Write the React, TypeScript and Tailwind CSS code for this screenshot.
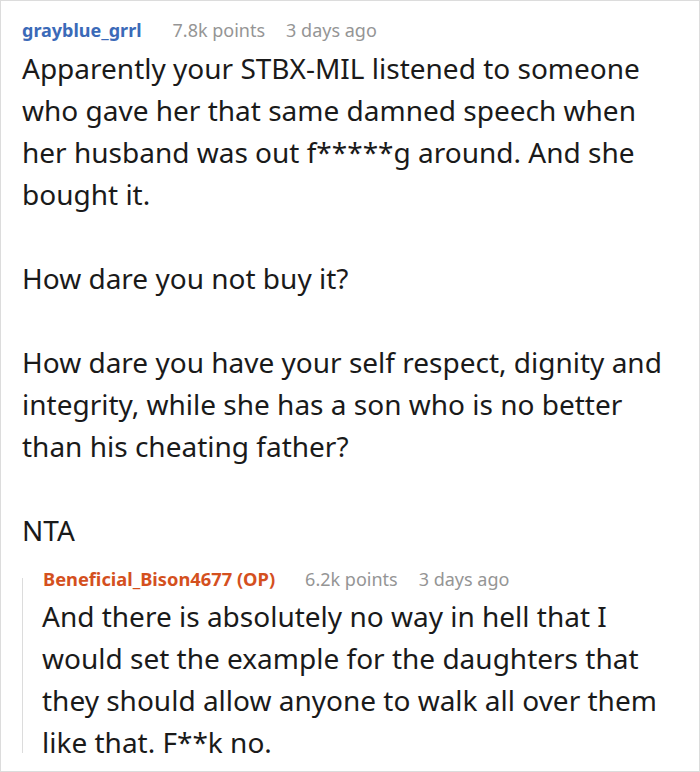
import React from "react";

const font = { fontFamily: '"Noto Sans", "Open Sans", sans-serif' };

export default function App() {
  return (
    <div className="w-[700px] h-[772px] bg-white border border-[#dcdcdc] overflow-hidden" style={font}>
      <div className="pl-[21px] pr-[24px] pt-[15px]">
        <div className="flex items-baseline text-[18px] leading-[28px]">
          <span className="font-bold text-[#3b6ab8]">grayblue_grrl</span>
          <span className="ml-[31px] text-[#959595]">7.8k points</span>
          <span className="ml-[21px] text-[#959595]">3 days ago</span>
        </div>
        <div className="mt-[3px] text-[28px] leading-[42px] text-[#1a1a1a]">
          <p>Apparently your STBX-MIL listened to someone who gave her that same damned speech when her husband was out f*****g around. And she bought it.</p>
          <p className="mt-[42px]">How dare you not buy it?</p>
          <p className="mt-[42px]">How dare you have your self respect, dignity and integrity, while she has a son who is no better than his cheating father?</p>
          <p className="mt-[42px]">NTA</p>
        </div>
        <div className="flex mt-[14px]">
          <div className="w-px h-[175px] mt-[13px] bg-[#dcdcdc] shrink-0" />
          <div className="pl-[20px]">
            <div className="flex items-baseline text-[18px] leading-[28px]">
              <span className="font-bold text-[18.3px] text-[#d4501e]">Beneficial_Bison4677 (OP)</span>
              <span className="ml-[30px] text-[#959595]">6.2k points</span>
              <span className="ml-[21px] text-[#959595]">3 days ago</span>
            </div>
            <p className="mt-[2px] -ml-[1px] text-[28px] leading-[42px] text-[#1a1a1a]">And there is absolutely no way in hell that I would set the example for the daughters that they should allow anyone to walk all over them like that. F**k no.</p>
          </div>
        </div>
      </div>
    </div>
  );
}
